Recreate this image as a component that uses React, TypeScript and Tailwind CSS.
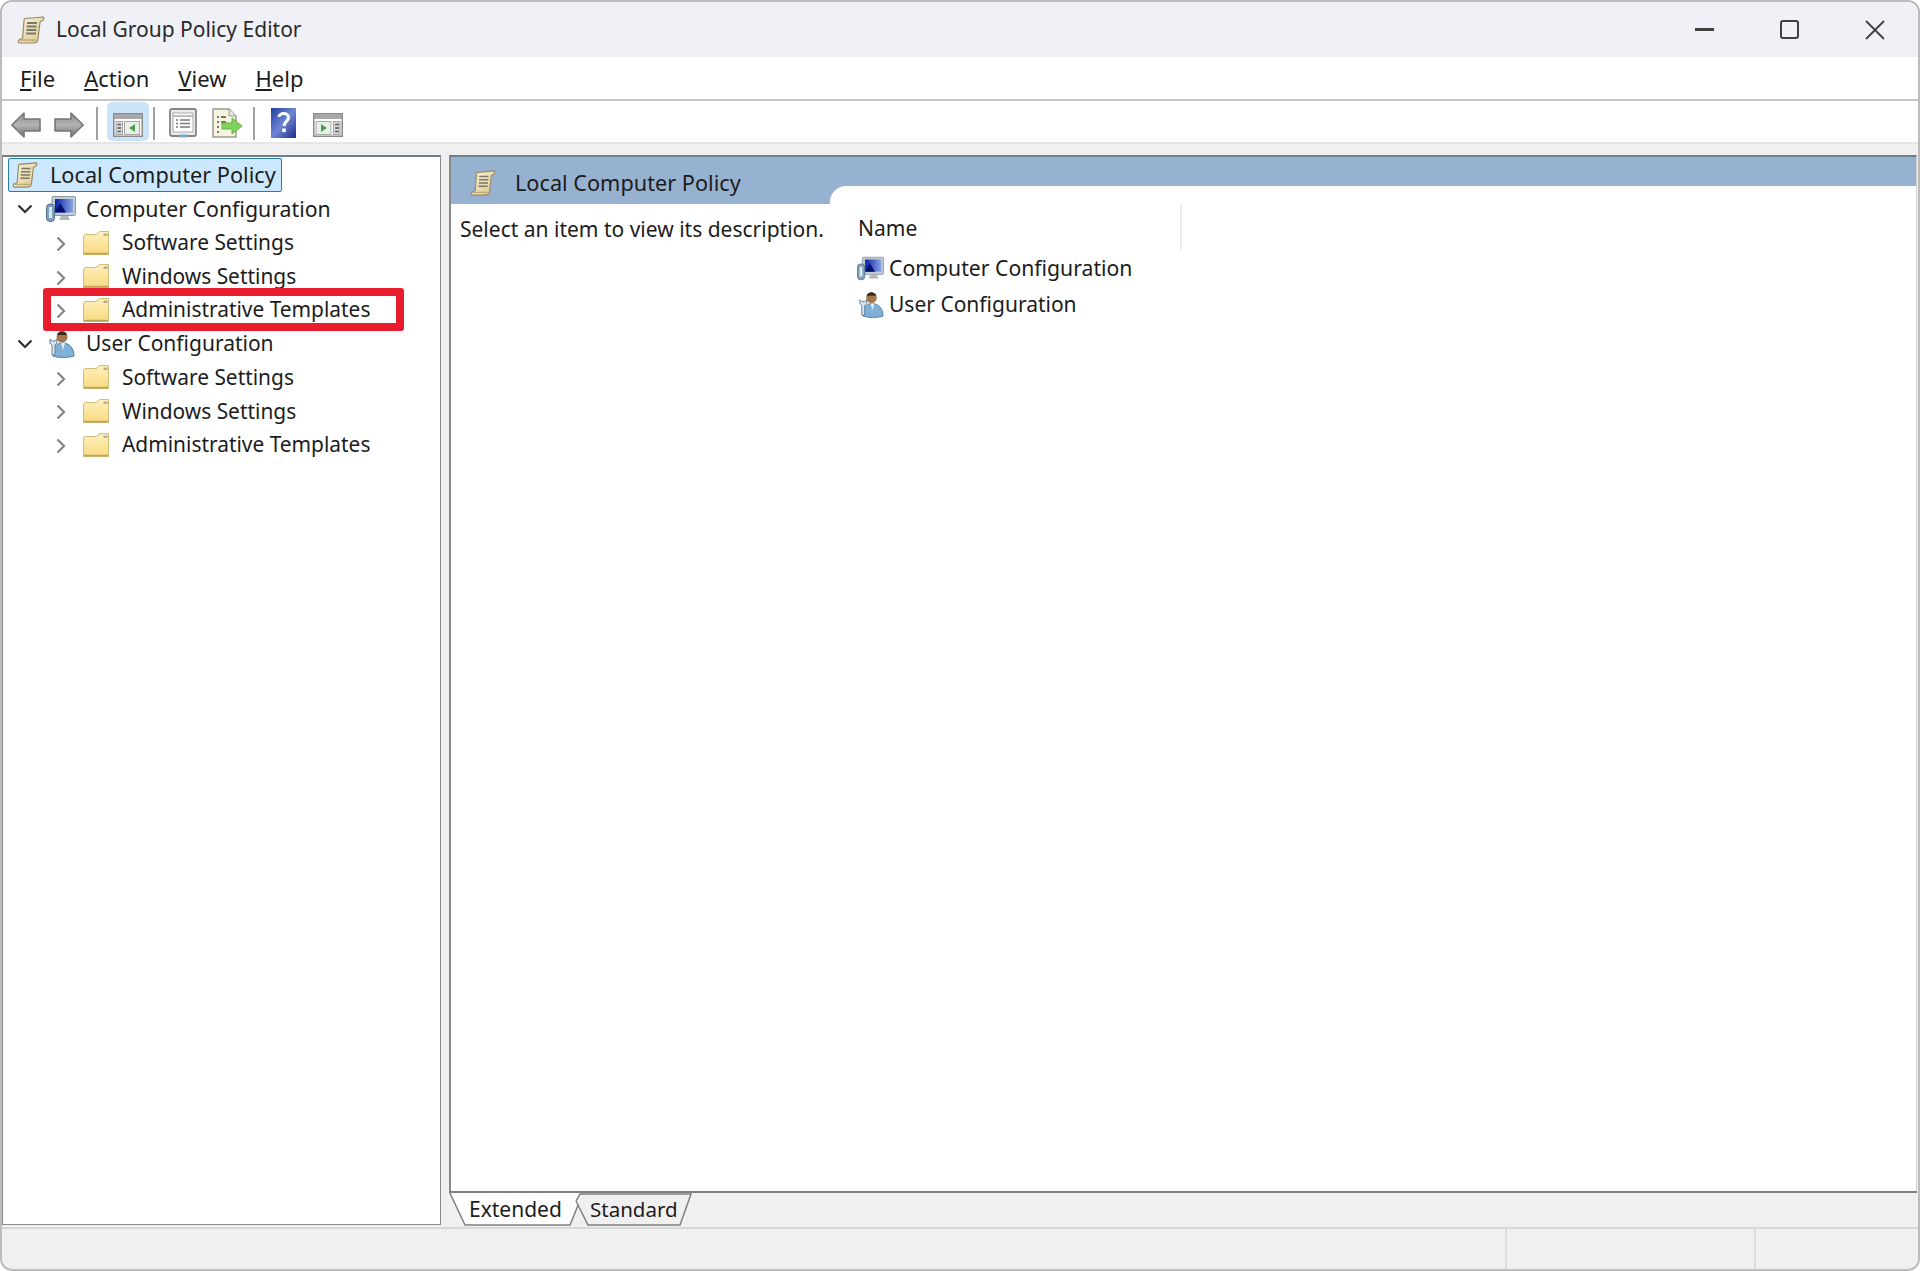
import type { ReactNode } from 'react';

const font = "font-['Noto_Sans','Open_Sans',sans-serif]";

function ScrollIcon({ className }: { className?: string }) {
  return (
    <svg viewBox="0 0 28 28" className={className}>
      <defs>
        <linearGradient id="paper" x1="0" y1="0" x2="1" y2="1">
          <stop offset="0" stopColor="#fbf3d6" />
          <stop offset="1" stopColor="#dcc68e" />
        </linearGradient>
      </defs>
      <path d="M8 2.5 L26 1 C27 1 27.5 2.5 26 4 L23 6 L21 23 C20.8 25.5 19 27 16 27 L3 27 C1 27 0.5 24.5 2.5 23.5 L5.5 22.5 L7 5 C7 3.5 7.2 2.6 8 2.5 Z" fill="url(#paper)" stroke="#978a6a" strokeWidth="1.2" />
      <path d="M10 7 H20 M9.7 10.5 H19.7 M9.4 14 H19.4 M9.1 17.5 H19" stroke="#7a7a6e" strokeWidth="1.8" />
      <path d="M3 24 H19" stroke="#bfa974" strokeWidth="1.4" />
    </svg>
  );
}

function ComputerIcon({ className }: { className?: string }) {
  return (
    <svg viewBox="0 0 30 26" className={className}>
      <defs>
        <linearGradient id="screen" x1="0" y1="0" x2="1" y2="0">
          <stop offset="0" stopColor="#0a1fa8" />
          <stop offset="1" stopColor="#8aa4e4" />
        </linearGradient>
      </defs>
      <rect x="6" y="0.5" width="23.5" height="19" rx="1" fill="#c2ccd6" stroke="#8c98a4" />
      <rect x="9" y="3" width="18" height="13.5" fill="url(#screen)" />
      <path d="M9 16.5 L14 7 L20 16.5 Z" fill="#03106e" />
      <path d="M15 20 H22 L24 24 H13 Z" fill="#aeb6be" />
      <rect x="0.5" y="8" width="8" height="17.5" rx="3.5" fill="#7fa0bd" stroke="#55748f" />
      <rect x="3" y="11" width="3" height="11" fill="#dde7f0" />
    </svg>
  );
}

function UserIcon({ className }: { className?: string }) {
  return (
    <svg viewBox="0 0 28 28" className={className}>
      <circle cx="15" cy="7" r="5.5" fill="#a5774f" />
      <path d="M10 5 C11 0 19 0 20 5 Z" fill="#3d2a1c" />
      <path d="M6 26 C6 15 11 13 16 13 C22 13 27 18 27 26 C20 28 12 28 6 26 Z" fill="#7fb0d6" stroke="#4f7ea3" />
      <path d="M14 13 L16 20 L18 13 Z" fill="#e9eef3" />
      <path d="M3 9 L3 13 L5 15 L5 25 L8 25 L8 15 L10 13 L10 9 L8 11 L5 11 Z" fill="#dbe6ef" stroke="#5d7f9b" />
    </svg>
  );
}

function FolderIcon() {
  return (
    <svg viewBox="0 0 26 24" className="w-[26px] h-[24px] shrink-0">
      <defs>
        <linearGradient id="folder" x1="0" y1="0" x2="0" y2="1">
          <stop offset="0" stopColor="#fdf0bc" />
          <stop offset="1" stopColor="#f8da80" />
        </linearGradient>
      </defs>
      <path d="M0.5 6 Q0.5 3.5 3 3.5 H13 L17 0.5 H25.5 V23.5 H0.5 Z" fill="url(#folder)" stroke="#d2ba78" />
      <path d="M20.5 2.5 H24.5 V5 H20.5 Z" fill="#b8ae92" />
      <path d="M1 22.6 H25" stroke="#bda35e" strokeWidth="1.6" />
    </svg>
  );
}

function Arrow({ flip }: { flip?: boolean }) {
  return (
    <svg viewBox="0 0 30 26" className={`w-[30px] h-[26px] ${flip ? '-scale-x-100' : ''}`}>
      <defs>
        <linearGradient id="arrow" x1="0" y1="0" x2="0" y2="1">
          <stop offset="0" stopColor="#8e8e8e" />
          <stop offset="0.5" stopColor="#b4b4b4" />
          <stop offset="1" stopColor="#6e6e6e" />
        </linearGradient>
      </defs>
      <path d="M0.8 13 L13 1 V7 H29 V19 H13 V25 Z" fill="url(#arrow)" stroke="#767676" strokeWidth="1.6" strokeLinejoin="round" />
    </svg>
  );
}

function PaneIcon({ right }: { right?: boolean }) {
  return (
    <svg viewBox="0 0 30 24" className="w-[30px] h-[24px]">
      <rect x="0.75" y="0.75" width="28.5" height="22.5" fill="#fff" stroke="#8a8a8a" strokeWidth="1.5" />
      <rect x="1" y="1" width="28" height="5" fill="#a8a8a8" />
      {right ? (
        <>
          <rect x="3" y="8.5" width="15" height="13" fill="#e8efe6" stroke="#a8a8a8" />
          <path d="M8 11 L14 15 L8 19 Z" fill="#4ba04b" />
          <rect x="20.5" y="8.5" width="6.5" height="13" fill="#e0e0e0" stroke="#a0a0a0" />
          <path d="M22 11.5 H26 M22 15 H26 M22 18.5 H26" stroke="#707070" strokeWidth="1.8" />
        </>
      ) : (
        <>
          <rect x="3" y="8.5" width="6.5" height="13" fill="#e0e0e0" stroke="#a0a0a0" />
          <path d="M4.5 11.5 H8 M4.5 15 H8 M4.5 18.5 H8" stroke="#707070" strokeWidth="1.8" />
          <rect x="11.5" y="8.5" width="15" height="13" fill="#e8efe6" stroke="#a8a8a8" />
          <path d="M22 11 L16 15 L22 19 Z" fill="#4ba04b" />
        </>
      )}
    </svg>
  );
}

function PropertiesIcon() {
  return (
    <svg viewBox="0 0 28 30" className="w-[28px] h-[30px]">
      <rect x="1" y="1" width="26" height="27" rx="2" fill="#ececec" stroke="#858585" strokeWidth="1.8" />
      <rect x="4" y="5" width="20" height="19" fill="#fff" stroke="#a8a8a8" />
      <path d="M4 8 H24" stroke="#a8a8a8" strokeWidth="1.4" />
      <path d="M7 12 H9 M11 12 H21 M7 15.5 H9 M11 15.5 H21 M7 19 H9 M11 19 H21" stroke="#7c7c7c" strokeWidth="1.4" />
      <rect x="10" y="26.5" width="8" height="3" fill="#6fb2c9" />
    </svg>
  );
}

function ExportIcon() {
  return (
    <svg viewBox="0 0 31 30" className="w-[31px] h-[30px]">
      <path d="M1 1 H17 L24 8 V29 H1 Z" fill="#f8f3de" stroke="#9a9a94" strokeWidth="1.5" />
      <path d="M17 1 V8 H24" fill="#e5e5e0" stroke="#9a9a94" />
      <path d="M5 9 H7 M9 9 H14 M5 14 H7 M9 14 H14 M5 19 H7 M5 24 H7" stroke="#4d4d4d" strokeWidth="1.6" />
      <path d="M10 15 H20 V10 L30 18 L20 26 V21 H10 Z" fill="#7ed35c" stroke="#5fb540" />
    </svg>
  );
}

function HelpIcon() {
  return (
    <svg viewBox="0 0 25 30" className="w-[25px] h-[30px]">
      <defs>
        <linearGradient id="help" x1="0" y1="0" x2="1" y2="1">
          <stop offset="0" stopColor="#1c3fa0" />
          <stop offset="0.5" stopColor="#6f86d3" />
          <stop offset="1" stopColor="#1d2f86" />
        </linearGradient>
      </defs>
      <rect x="0" y="0" width="25" height="30" fill="url(#help)" />
      <path d="M8 9 C8 4.5 17.5 4 17.5 9.5 C17.5 13 13.5 13.5 13 18" fill="none" stroke="#fff" strokeWidth="3" />
      <rect x="11.2" y="20.5" width="3.6" height="3.6" fill="#fff" />
    </svg>
  );
}

function Chevron({ open }: { open?: boolean }) {
  return open ? (
    <svg viewBox="0 0 16 10" className="w-[16px] h-[10px]">
      <path d="M1.5 1.5 L8 8 L14.5 1.5" fill="none" stroke="#2f2f2f" strokeWidth="2.2" />
    </svg>
  ) : (
    <svg viewBox="0 0 10 16" className="w-[10px] h-[16px] mt-[3px]">
      <path d="M1.5 1.5 L8 8 L1.5 14.5" fill="none" stroke="#858585" strokeWidth="2.2" />
    </svg>
  );
}

function Sep() {
  return <div className="w-[2px] h-[33px] bg-[#a0a0a0] mt-[3px]" />;
}

function TreeGroup({ icon, label, labelClass }: { icon: ReactNode; label: string; labelClass?: string }) {
  return (
    <>
      <div className="flex items-center h-[33.7px]">
        <div className="w-[16px] ml-[14px] flex justify-center"><Chevron open /></div>
        <div className="w-[30px] ml-[13px] flex justify-center">{icon}</div>
        <span className={`ml-[10px] ${labelClass ?? ''}`}>{label}</span>
      </div>
      {['Software Settings', 'Windows Settings', 'Administrative Templates'].map(name => (
        <div key={name} className="flex items-center h-[33.7px]">
          <div className="ml-[53px] w-[10px] flex"><Chevron /></div>
          <div className="ml-[17px]"><FolderIcon /></div>
          <span className="ml-[13px] text-[20.9px]">{name}</span>
        </div>
      ))}
    </>
  );
}

function Tab({ label, active, wide }: { label: string; active?: boolean; wide?: boolean }) {
  return (
    <div className={`relative h-[33px] flex items-center ${wide ? 'w-[135px] pl-[20px] -mr-[14px]' : 'w-[122px] pl-[20px] text-[20.5px]'}`}>
      <svg viewBox={wide ? '0 0 135 33' : '0 0 122 33'} className="absolute inset-0 w-full h-full">
        {active ? (
          <path d="M0 -2 L16 32 H121 L134 0" fill="#fff" stroke="#808080" strokeWidth="1.5" />
        ) : (
          <path d="M6 8 L10 1 H121 L110 32 H18 L6 8" fill="#f0f0f0" stroke="#808080" strokeWidth="1.5" />
        )}
      </svg>
      <span className="relative">{label}</span>
    </div>
  );
}

export default function App() {
  return (
    <div className={`w-[1920px] h-[1271px] bg-white text-[21px] leading-none text-[#1c1c1c] ${font}`}>
      <div className="relative h-full flex flex-col overflow-hidden rounded-[12px] border-2 border-[#bcbcbc] bg-[#f0f0f0]">
        <div className="h-[55px] shrink-0 bg-[#eff1f7] flex items-center pl-[15px]">
          <ScrollIcon className="w-[28px] h-[28px]" />
          <span className="ml-[11px] text-[#2a2a2a]">Local Group Policy Editor</span>
          <div className="ml-auto flex items-center gap-[66px] pr-[33px]">
            <div className="w-[19px] h-[2.5px] bg-[#404040]" />
            <div className="w-[19px] h-[19px] rounded-[3px] border-2 border-[#404040]" />
            <svg viewBox="0 0 20 20" className="w-[20px] h-[20px]">
              <path d="M1 1 L19 19 M19 1 L1 19" stroke="#404040" strokeWidth="1.8" />
            </svg>
          </div>
        </div>

        <div className="h-[44px] shrink-0 bg-white border-b-2 border-[#c6c6c6] flex items-center pl-[18px] pb-[1px] gap-[29px] text-[22px]">
          <span><u>F</u>ile</span>
          <span><u>A</u>ction</span>
          <span><u>V</u>iew</span>
          <span><u>H</u>elp</span>
        </div>

        <div className="h-[41px] shrink-0 bg-white flex items-center pl-[9px]">
          <div className="mt-[6px]"><Arrow /></div>
          <div className="ml-[13px] mt-[6px]"><Arrow flip /></div>
          <div className="ml-[12px]"><Sep /></div>
          <div className="ml-[9px] w-[42px] h-[39px] rounded-[5px] bg-[#cce4f7] flex items-center justify-center pt-[7px]"><PaneIcon /></div>
          <div className="ml-[4px]"><Sep /></div>
          <div className="ml-[14px] mt-[3px]"><PropertiesIcon /></div>
          <div className="ml-[15px] mt-[3px]"><ExportIcon /></div>
          <div className="ml-[10px]"><Sep /></div>
          <div className="ml-[16px] mt-[3px]"><HelpIcon /></div>
          <div className="ml-[17px] mt-[7px]"><PaneIcon right /></div>
        </div>

        <div className="flex-1 min-h-0 flex gap-[8px] border-t-2 border-[#e6e6e6] pt-[11px] pb-[2px]">
          <div className="relative w-[439px] shrink-0 bg-white border border-[#8c8c8c] border-t-2 border-t-[#6f7f88] pt-[1px]">
            <div className="flex items-center h-[34px] ml-[5px] w-[274px] bg-[#cce8ff] border border-[#2a7c9c] rounded-[2px] text-[21.7px]">
              <ScrollIcon className="ml-[3px] w-[26px] h-[26px]" />
              <span className="ml-[12px]">Local Computer Policy</span>
            </div>
            <TreeGroup icon={<ComputerIcon className="w-[30px] h-[26px]" />} label="Computer Configuration" labelClass="text-[21.3px]" />
            <TreeGroup icon={<UserIcon className="w-[28px] h-[28px]" />} label="User Configuration" />
            <div className="absolute left-[40px] top-[131px] w-[361px] h-[43px] rounded-[3px] border-[8px] border-[#e81c2c]" />
          </div>

          <div className="flex-1 min-w-0 flex flex-col pr-[1px]">
            <div className="flex-1 min-h-0 flex bg-white border-l-2 border-l-[#8a8a8a] border-t-2 border-t-[#6f7f88] border-r border-r-[#d0d0d0]">
              <div className="w-[379px] shrink-0 flex flex-col">
                <div className="h-[47px] bg-[#97b2d0] flex items-center pl-[19px] pt-[4px] text-[21.7px]">
                  <ScrollIcon className="w-[26px] h-[26px]" />
                  <span className="ml-[19px]">Local Computer Policy</span>
                </div>
                <span className="ml-[9px] mt-[15px]">Select an item to view its description.</span>
              </div>
              <div className="flex-1 min-w-0 flex flex-col bg-[#97b2d0]">
                <div className="h-[29px] shrink-0" />
                <div className="flex-1 bg-white rounded-tl-[16px]">
                  <div className="relative w-[352px] h-[54px] flex items-center pl-[28px] pt-[30px]">
                    <span>Name</span>
                    <div className="absolute right-0 top-[18px] w-[2px] h-[46px] bg-[#ececec]" />
                  </div>
                  <div className="flex items-center h-[36px] mt-[10px] pl-[27px]">
                    <ComputerIcon className="w-[27px] h-[25px]" />
                    <span className="ml-[5px] text-[21.2px]">Computer Configuration</span>
                  </div>
                  <div className="flex items-center h-[36px] pl-[27px]">
                    <UserIcon className="w-[27px] h-[27px]" />
                    <span className="ml-[5px]">User Configuration</span>
                  </div>
                </div>
              </div>
            </div>
            <div className="h-[34px] shrink-0 border-t-2 border-t-[#808080] flex items-center">
              <Tab label="Extended" active wide />
              <Tab label="Standard" />
            </div>
          </div>
        </div>

        <div className="h-[42px] shrink-0 border-t-2 border-[#d8d8d8] flex justify-end">
          <div className="w-[249px] border-l-2 border-[#dcdcdc]" />
          <div className="w-[164px] border-l-2 border-[#dcdcdc]" />
        </div>
      </div>
    </div>
  );
}
